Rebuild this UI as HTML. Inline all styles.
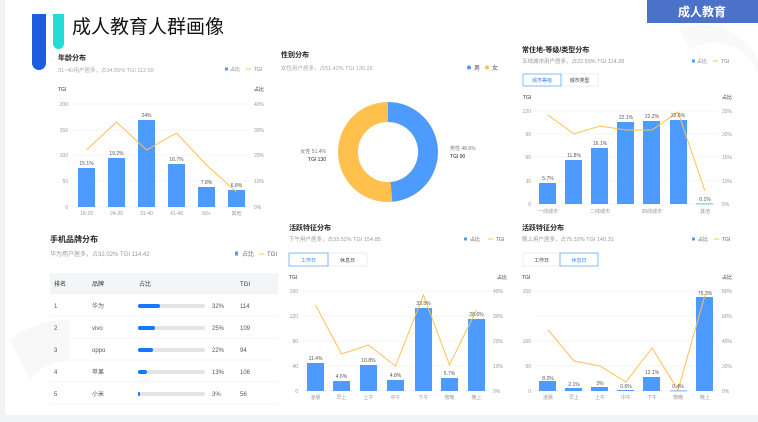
<!DOCTYPE html>
<html><head><meta charset="utf-8"><style>
html,body{margin:0;padding:0;background:#f2f3f4;}
svg{display:block;font-family:"Liberation Sans","Noto Sans CJK SC",sans-serif;}
</style></head><body>
<svg width="758" height="422" viewBox="0 0 758 422" xmlns="http://www.w3.org/2000/svg">
<rect x="0" y="0" width="758" height="422" fill="#f2f3f4"/>
<rect x="5" y="0" width="753" height="415" fill="#fff"/>
<!-- faint watermark -->
<path d="M10 340 A90 90 0 0 1 70 320 L70 360 A50 50 0 0 0 30 380 Z" fill="#f8f8f9"/>
<path d="M680 30 A60 60 0 0 1 758 60 L758 75 A45 45 0 0 0 690 50 Z" fill="#f9f9fa"/>
<!-- header -->
<rect x="32" y="14" width="14" height="56" rx="7" fill="#1f5de0"/>
<rect x="32" y="14" width="14" height="10" fill="#1f5de0"/>
<rect x="53" y="14" width="11" height="35" rx="5.5" fill="#22ddd6"/>
<rect x="53" y="14" width="11" height="8" fill="#22ddd6"/>
<text x="72" y="33" font-size="19" fill="#111">成人教育人群画像</text>
<rect x="647" y="0" width="111" height="23" fill="#4a72c8"/>
<text x="702" y="16" font-size="12" fill="#fff" text-anchor="middle" font-weight="bold">成人教育</text>

<g font-size="5" fill="#999">
<!-- ===== Age ===== -->
<text x="58" y="60" font-size="7" font-weight="bold" fill="#222">年龄分布</text>
<text x="58" y="72" font-size="5.5" fill="#aaa">31~40用户居多，占34.05% TGI 112.59</text>
<rect x="225" y="67.5" width="3" height="3" fill="#4e9bff"/><text x="230" y="71" fill="#888">占比</text>
<line x1="246" y1="69" x2="251" y2="69" stroke="#ffc04d"/><text x="254" y="71" fill="#888">TGI</text>
<text x="58" y="91" fill="#333">TGI</text><text x="254" y="91" fill="#333">占比</text>
<g stroke="#eee" stroke-width="0.6">
<line x1="72" y1="104" x2="250" y2="104"/><line x1="72" y1="130" x2="250" y2="130"/><line x1="72" y1="155" x2="250" y2="155"/><line x1="72" y1="181" x2="250" y2="181"/><line x1="72" y1="207" x2="250" y2="207"/></g>
<text x="68" y="106" text-anchor="end">200</text><text x="68" y="132" text-anchor="end">150</text><text x="68" y="157" text-anchor="end">100</text><text x="68" y="183" text-anchor="end">50</text><text x="68" y="209" text-anchor="end">0</text>
<text x="254" y="106">40%</text><text x="254" y="132">30%</text><text x="254" y="157">20%</text><text x="254" y="183">10%</text><text x="254" y="209">0%</text>
<g fill="#4e9bff">
<rect x="78" y="168" width="17" height="39"/><rect x="108" y="158" width="17" height="49"/><rect x="138" y="120" width="17" height="87"/><rect x="168" y="164" width="17" height="43"/><rect x="198" y="187" width="17" height="20"/><rect x="228" y="190" width="17" height="17"/></g>
<polyline points="86.5,150 116.5,122 146.5,150 176.5,133 206.5,165 236.5,192" fill="none" stroke="#ffc04d" stroke-width="1"/>
<g fill="#555" text-anchor="middle">
<text x="86.5" y="165">15.1%</text><text x="116.5" y="155">19.2%</text><text x="146.5" y="117">24%</text><text x="176.5" y="161">16.7%</text><text x="206.5" y="184">7.8%</text><text x="236.5" y="187">6.8%</text></g>
<g text-anchor="middle"><text x="86.5" y="215">18-23</text><text x="116.5" y="215">24-30</text><text x="146.5" y="215">31-40</text><text x="176.5" y="215">41-49</text><text x="206.5" y="215">50+</text><text x="236.5" y="215">其他</text></g>

<!-- ===== Gender ===== -->
<text x="281" y="57" font-size="7" font-weight="bold" fill="#222">性别分布</text>
<text x="281" y="70" font-size="5.5" fill="#aaa">女性用户居多，占51.42% TGI 130.28</text>
<circle cx="469" cy="67.5" r="2" fill="#4e9bff"/><text x="474" y="70" font-size="6" fill="#555">男</text>
<circle cx="487" cy="67.5" r="2" fill="#ffc04d"/><text x="492" y="70" font-size="6" fill="#555">女</text>
<circle cx="388" cy="152" r="40" fill="none" stroke="#ffc04d" stroke-width="20"/>
<path d="M388 102 A50 50 0 0 1 392.4 201.8 L390.6 181.9 A30 30 0 0 0 388 122 Z" fill="#4e9bff"/>
<text x="450" y="150" fill="#777">男性 48.6%</text><text x="450" y="158" fill="#222">TGI 90</text>
<text x="326" y="153" text-anchor="end" fill="#777">女性 51.4%</text><text x="326" y="161" text-anchor="end" fill="#222">TGI 130</text>

<!-- ===== Region ===== -->
<text x="522" y="52" font-size="7" font-weight="bold" fill="#222">常住地-等级/类型分布</text>
<text x="522" y="63" font-size="5.5" fill="#999">五线城市用户居多，占22.59% TGI 114.38</text>
<rect x="692" y="59.5" width="3" height="3" fill="#4e9bff"/><text x="697" y="63" fill="#888">占比</text>
<line x1="713" y1="61" x2="718" y2="61" stroke="#ffc04d"/><text x="721" y="63" fill="#888">TGI</text>
<rect x="561" y="74" width="37" height="12" fill="#fff" stroke="#e3e3e3" stroke-width="0.6"/>
<rect x="523" y="74" width="38" height="12" fill="#fff" stroke="#4e9bff" stroke-width="0.7"/>
<text x="542" y="82" text-anchor="middle" fill="#3a86f0">城市等级</text><text x="579.5" y="82" text-anchor="middle" fill="#444">城市类型</text>
<text x="523" y="99" fill="#333">TGI</text><text x="722" y="99" fill="#333">占比</text>
<g stroke="#eee" stroke-width="0.6">
<line x1="535" y1="111" x2="718" y2="111"/><line x1="535" y1="134" x2="718" y2="134"/><line x1="535" y1="157" x2="718" y2="157"/><line x1="535" y1="181" x2="718" y2="181"/><line x1="535" y1="204" x2="718" y2="204"/></g>
<text x="531" y="113" text-anchor="end">120</text><text x="531" y="136" text-anchor="end">90</text><text x="531" y="159" text-anchor="end">60</text><text x="531" y="183" text-anchor="end">30</text><text x="531" y="206" text-anchor="end">0</text>
<text x="722" y="113">25%</text><text x="722" y="136">20%</text><text x="722" y="159">15%</text><text x="722" y="183">10%</text><text x="722" y="206">5%</text>
<g fill="#4e9bff">
<rect x="539" y="183" width="17" height="21"/><rect x="565" y="160" width="17" height="44"/><rect x="591" y="148" width="17" height="56"/><rect x="617" y="122" width="17" height="82"/><rect x="643" y="121" width="17" height="83"/><rect x="670" y="120" width="17" height="84"/><rect x="696" y="203.5" width="17" height="0.8"/></g>
<polyline points="548,115 574,134 600,126 626,130 652,130 678,112 705,191" fill="none" stroke="#ffc04d" stroke-width="1"/>
<g fill="#555" text-anchor="middle">
<text x="548" y="180">5.7%</text><text x="574" y="157">11.8%</text><text x="600" y="145">16.1%</text><text x="626" y="119">22.1%</text><text x="652" y="118">22.2%</text><text x="678" y="117">22.6%</text><text x="705" y="201">0.1%</text></g>
<g text-anchor="middle"><text x="548" y="213">一线城市</text><text x="600" y="213">二线城市</text><text x="652" y="213">四线城市</text><text x="705" y="213">其他</text></g>

<!-- ===== Phone ===== -->
<text x="50" y="242" font-size="8" font-weight="bold" fill="#222">手机品牌分布</text>
<text x="50" y="256" font-size="6" fill="#999">华为用户居多，占32.02% TGI 114.42</text>
<rect x="235" y="251.5" width="3" height="4" fill="#4e9bff"/><text x="242" y="256" font-size="6" fill="#666">占比</text>
<line x1="259" y1="254" x2="264" y2="254" stroke="#ffc04d"/><text x="267" y="256" font-size="6" fill="#666">TGI</text>
<rect x="50" y="273" width="228" height="21" fill="#f4f5f7"/>
<g font-size="6" fill="#333"><text x="54" y="286">排名</text><text x="92" y="286">品牌</text><text x="139" y="286">占比</text><text x="240" y="286">TGI</text></g>
<g stroke="#eee" stroke-width="0.6"><line x1="50" y1="316" x2="278" y2="316"/><line x1="50" y1="338" x2="278" y2="338"/><line x1="50" y1="360" x2="278" y2="360"/><line x1="50" y1="382" x2="278" y2="382"/><line x1="50" y1="404" x2="278" y2="404"/></g>
<g font-size="6" fill="#555">
<text x="54" y="308">1</text><text x="92" y="308">华为</text><text x="212" y="308">32%</text><text x="240" y="308">114</text>
<text x="54" y="330">2</text><text x="92" y="330">vivo</text><text x="212" y="330">25%</text><text x="240" y="330">109</text>
<text x="54" y="352">3</text><text x="92" y="352">oppo</text><text x="212" y="352">22%</text><text x="240" y="352">94</text>
<text x="54" y="374">4</text><text x="92" y="374">苹果</text><text x="212" y="374">13%</text><text x="240" y="374">106</text>
<text x="54" y="396">5</text><text x="92" y="396">小米</text><text x="212" y="396">3%</text><text x="240" y="396">56</text></g>
<g fill="#e4e4e4"><rect x="138" y="304" width="67" height="4" rx="2"/><rect x="138" y="326" width="67" height="4" rx="2"/><rect x="138" y="348" width="67" height="4" rx="2"/><rect x="138" y="370" width="67" height="4" rx="2"/><rect x="138" y="392" width="67" height="4" rx="2"/></g>
<g fill="#1677ff"><rect x="138" y="304" width="22" height="4" rx="2"/><rect x="138" y="326" width="17" height="4" rx="2"/><rect x="138" y="348" width="15" height="4" rx="2"/><rect x="138" y="370" width="9" height="4" rx="2"/><rect x="138" y="392" width="2" height="4" rx="1"/></g>

<!-- ===== Activity weekday ===== -->
<text x="289" y="230" font-size="7" font-weight="bold" fill="#222">活跃特征分布</text>
<text x="289" y="241" font-size="5.5" fill="#999">下午用户居多，占33.52% TGI 154.85</text>
<rect x="464" y="237.5" width="3" height="3" fill="#4e9bff"/><text x="470" y="241" fill="#666">占比</text>
<line x1="488" y1="239" x2="493" y2="239" stroke="#ffc04d"/><text x="496" y="241" fill="#666">TGI</text>
<rect x="328" y="253" width="39" height="13" fill="#fff" stroke="#e3e3e3" stroke-width="0.6"/>
<rect x="289" y="253" width="39" height="13" fill="#fff" stroke="#4e9bff" stroke-width="0.7"/>
<text x="308.5" y="262" text-anchor="middle" fill="#3a86f0">工作日</text><text x="347.5" y="262" text-anchor="middle" fill="#444">休息日</text>
<text x="289" y="279" fill="#333">TGI</text><text x="497" y="279" fill="#333">占比</text>
<g stroke="#eee" stroke-width="0.6">
<line x1="303" y1="291" x2="490" y2="291"/><line x1="303" y1="316" x2="490" y2="316"/><line x1="303" y1="341" x2="490" y2="341"/><line x1="303" y1="366" x2="490" y2="366"/><line x1="303" y1="391" x2="490" y2="391"/></g>
<text x="298" y="293" text-anchor="end">160</text><text x="298" y="318" text-anchor="end">120</text><text x="298" y="343" text-anchor="end">80</text><text x="298" y="368" text-anchor="end">40</text><text x="298" y="393" text-anchor="end">0</text>
<text x="493" y="293">40%</text><text x="493" y="318">30%</text><text x="493" y="343">20%</text><text x="493" y="368">10%</text><text x="493" y="393">0%</text>
<g fill="#4e9bff">
<rect x="307" y="363" width="17" height="28"/><rect x="333" y="381" width="17" height="10"/><rect x="360" y="365" width="17" height="26"/><rect x="387" y="380" width="17" height="11"/><rect x="415" y="308" width="17" height="83"/><rect x="441" y="378" width="17" height="13"/><rect x="468" y="319" width="17" height="72"/></g>
<polyline points="315.5,305 341.5,354 368.5,345 395.5,366 423.5,295 449.5,365 476.5,310" fill="none" stroke="#ffc04d" stroke-width="1"/>
<g fill="#555" text-anchor="middle">
<text x="315.5" y="360">11.4%</text><text x="341.5" y="378">4.6%</text><text x="368.5" y="362">10.8%</text><text x="395.5" y="377">4.8%</text><text x="423.5" y="305">33.5%</text><text x="449.5" y="375">5.7%</text><text x="476.5" y="316">28.6%</text></g>
<g text-anchor="middle"><text x="315.5" y="399">凌晨</text><text x="341.5" y="399">早上</text><text x="368.5" y="399">上午</text><text x="395.5" y="399">中午</text><text x="423.5" y="399">下午</text><text x="449.5" y="399">傍晚</text><text x="476.5" y="399">晚上</text></g>

<!-- ===== Activity weekend ===== -->
<text x="522" y="230" font-size="7" font-weight="bold" fill="#222">活跃特征分布</text>
<text x="522" y="241" font-size="5.5" fill="#999">晚上用户居多，占75.32% TGI 140.31</text>
<rect x="692" y="237.5" width="3" height="3" fill="#4e9bff"/><text x="698" y="241" fill="#666">占比</text>
<line x1="714" y1="239" x2="719" y2="239" stroke="#ffc04d"/><text x="722" y="241" fill="#666">TGI</text>
<rect x="523" y="253" width="37" height="13" fill="#fff" stroke="#e3e3e3" stroke-width="0.6"/>
<rect x="560" y="253" width="38" height="13" fill="#fff" stroke="#4e9bff" stroke-width="0.7"/>
<text x="541.5" y="262" text-anchor="middle" fill="#444">工作日</text><text x="579" y="262" text-anchor="middle" fill="#3a86f0">休息日</text>
<text x="522" y="279" fill="#333">TGI</text><text x="722" y="279" fill="#333">占比</text>
<g stroke="#eee" stroke-width="0.6">
<line x1="535" y1="291" x2="718" y2="291"/><line x1="535" y1="316" x2="718" y2="316"/><line x1="535" y1="341" x2="718" y2="341"/><line x1="535" y1="366" x2="718" y2="366"/><line x1="535" y1="391" x2="718" y2="391"/></g>
<text x="531" y="293" text-anchor="end">150</text><text x="531" y="343" text-anchor="end">100</text><text x="531" y="368" text-anchor="end">50</text><text x="531" y="393" text-anchor="end">0</text>
<text x="722" y="293">80%</text><text x="722" y="318">60%</text><text x="722" y="343">40%</text><text x="722" y="368">20%</text><text x="722" y="393">0%</text>
<g fill="#4e9bff">
<rect x="539" y="381" width="17" height="10"/><rect x="565" y="388" width="17" height="3"/><rect x="591" y="387" width="17" height="4"/><rect x="617" y="390" width="17" height="1"/><rect x="643" y="377" width="17" height="14"/><rect x="670" y="390.5" width="17" height="0.8"/><rect x="696" y="297" width="17" height="94"/></g>
<polyline points="548,330 574,361 600,366 626,382 652,348 678,390 705,295" fill="none" stroke="#ffc04d" stroke-width="1"/>
<g fill="#555" text-anchor="middle">
<text x="548" y="380">8.2%</text><text x="574" y="386">2.1%</text><text x="600" y="385">3%</text><text x="626" y="388">0.6%</text><text x="652" y="374">12.1%</text><text x="678" y="388">0.4%</text><text x="705" y="295">75.3%</text></g>
<g text-anchor="middle"><text x="548" y="399">凌晨</text><text x="574" y="399">早上</text><text x="600" y="399">上午</text><text x="626" y="399">中午</text><text x="652" y="399">下午</text><text x="678" y="399">傍晚</text><text x="705" y="399">晚上</text></g>
</g>
</svg>
</body></html>
